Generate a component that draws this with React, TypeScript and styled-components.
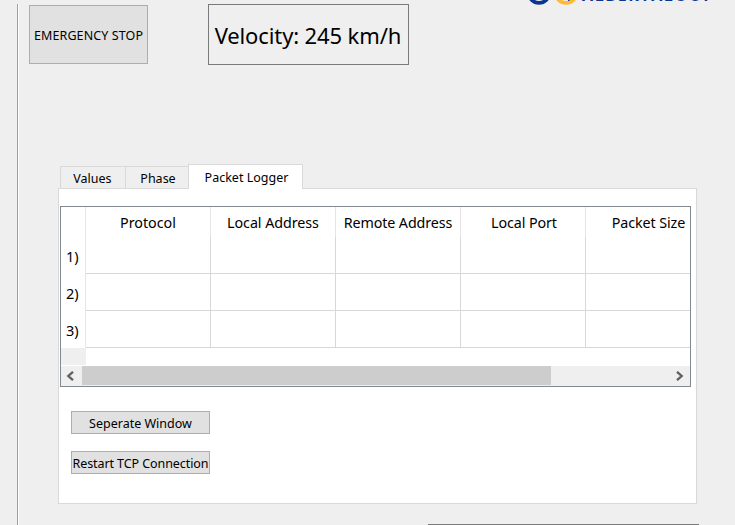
import React from "react";
import styled, { createGlobalStyle } from "styled-components";

const Global = createGlobalStyle`
  * { box-sizing: border-box; }
  html, body { margin: 0; overflow: hidden; background: #efefef; }
  body { font-family: "Noto Sans", "Open Sans", sans-serif; color: #000; }
`;

const Window = styled.main`
  width: 735px; height: 525px; overflow: hidden; background: #efefef;
  display: grid; grid-template-columns: 17px 718px;
`;
const Divider = styled.div`
  grid-column: 2; height: 521px; margin-top: 4px;
  border-left: 1px solid #a0a0a0; box-shadow: inset 1px 0 #fff;
`;
const Content = styled.div`display: flex; flex-direction: column; margin-top: -4px; height: 525px;`;
const TopBar = styled.header`display: flex; align-items: flex-start; height: 164px; padding-left: 11px;`;
const Label = styled.span<{ $size: number; $track?: number; $y?: number; $shift?: number }>`
  font-size: ${p => p.$size}px; letter-spacing: ${p => p.$track ?? 0}px;
  line-height: 1.2; white-space: nowrap; padding-top: ${p => p.$y ?? 0}px;
  margin-right: ${p => -(p.$track ?? 0)}px;
  margin-left: ${p => (p.$shift ?? 0) * 2}px;
`;
const Button = styled.button<{ $w: number; $h: number }>`
  width: ${p => p.$w}px; height: ${p => p.$h}px; padding: 0; border: 1px solid #adadad;
  border-radius: 0; background: #e1e1e1; color: #000; font-family: inherit;
  display: flex; align-items: center; justify-content: center; overflow: hidden;
`;
const StopSlot = styled.div`margin-top: 5px;`;
const Velocity = styled.div`
  width: 201px; height: 61px; margin: 4px 0 0 60px; border: 1px solid #7a7a7a;
  display: flex; align-items: center; justify-content: center; padding-top: 2px;
`;
const Brand = styled.div`
  display: flex; align-items: flex-start; height: 6px; margin-left: 119px; color: #0b3690;
`;
const BrandName = styled.span`
  margin: -15px 0 0 4px; font: 700 16px/20px "Open Sans", sans-serif; letter-spacing: 1.6px; white-space: nowrap;
`;
const Tabs = styled.nav`display: flex; align-items: flex-end; height: 25px; padding-left: 42px; margin-bottom: -1px; z-index: 1;`;
const Tab = styled.div<{ $w: number; $active?: boolean }>`
  width: ${p => p.$w}px; height: ${p => p.$active ? 25 : 23}px;
  border: 1px solid #d9d9d9; border-bottom: ${p => p.$active ? "0" : "1px solid #d9d9d9"};
  border-right-width: ${p => p.$active ? 1 : 0}px;
  background: ${p => p.$active ? "#fff" : "#efefef"};
  display: flex; align-items: center; justify-content: center;
`;
const Panel = styled.section`
  width: 639px; height: 316px; margin-left: 40px; padding: 17px 0 0 1px;
  border: 1px solid #d9d9d9; background: #fff;
`;
const TableFrame = styled.div`width: 631px; height: 181px; border: 1px solid #828790; overflow: hidden;`;
const Grid = styled.div`display: grid; grid-template-columns: 25px repeat(4, 125px) 104px; grid-template-rows: 30px 37px 37px 37px;`;
const HeaderCell = styled.div<{ $last?: boolean }>`
  width: 125px; height: 30px; border-right: ${p => p.$last ? 0 : 1}px solid #e5e5e5;
  display: flex; align-items: center; justify-content: center; padding-top: 2px;
`;
const RowHead = styled.div`
  border-right: 1px solid #e5e5e5; display: flex; align-items: center; padding: 2px 0 0 5px;
`;
const Cell = styled.div`border-right: 1px solid #d8d8d8; border-bottom: 1px solid #d8d8d8; &:nth-child(6n) { border-right: 0; }`;
const Corner = styled.div`width: 25px; height: 17px; background: #efefef; margin-bottom: 1px;`;
const ScrollBar = styled.div`display: flex; height: 20px; background: #efefef;`;
const Arrow = styled.div<{ $left?: boolean }>`
  width: 21px; height: 19px; display: flex; align-items: center; justify-content: center;
  padding-right: ${p => p.$left ? 3 : 0}px;
`;
const Thumb = styled.div`width: 469px; height: 19px; background: #cdcdcd; margin-right: 118px;`;
const Actions = styled.div`display: flex; flex-direction: column; gap: 17px; padding: 24px 0 0 11px;`;
const LowerFrame = styled.div`width: 271px; height: 1px; margin: 20px 0 0 410px; background: #7a7a7a;`;

const headings = [
  { name: "Protocol", track: 0 },
  { name: "Local Address", track: -0.05 },
  { name: "Remote Address", track: -0.1 },
  { name: "Local Port", track: -0.1, shift: 1 },
  { name: "Packet Size", track: -0.1 },
];

function Chevron({ right = false }: { right?: boolean }) {
  return <svg width="8" height="10" viewBox="0 0 8 10">
    <path d={right ? "M1 0.8 L5.7 5 L1 9.2" : "M7 0.8 L2.3 5 L7 9.2"} fill="none" stroke="#606060" strokeWidth="2.3" />
  </svg>;
}

export default function App() {
  return <>
    <Global />
    <Window><Divider><Content>
      <TopBar>
        <StopSlot><Button $w={119} $h={59}><Label $size={12.5} $track={0.1} $y={2}>EMERGENCY STOP</Label></Button></StopSlot>
        <Velocity><Label $size={22} $track={-0.12} $shift={-0.5}>Velocity: 245 km/h</Label></Velocity>
        <Brand>
          <svg width="50" height="6" viewBox="0 0 50 6">
            <circle cx="11" cy="-7.4" r="10.3" fill="none" stroke="#0b3690" strokeWidth="3.8" />
            <circle cx="38" cy="-7.4" r="10.3" fill="none" stroke="#ffb933" strokeWidth="3.8" />
            <path d="M40 0h1.5" stroke="#0b3690" strokeWidth="2" />
          </svg>
          <BrandName>ALBERTALOOP</BrandName>
        </Brand>
      </TopBar>
      <Tabs>
        <Tab $w={65}><Label $size={12.5} $y={2} $shift={-0.5}>Values</Label></Tab>
        <Tab $w={63}><Label $size={12.5} $y={2} $shift={1}>Phase</Label></Tab>
        <Tab $w={115} $active><Label $size={12.5} $y={1} $shift={1}>Packet Logger</Label></Tab>
      </Tabs>
      <Panel>
        <TableFrame>
          <Grid>
            <RowHead />
            {headings.map((h, i) => <HeaderCell key={h.name} $last={i === 4}><Label $size={14.3} $track={h.track} $shift={h.shift}>{h.name}</Label></HeaderCell>)}
            {[1, 2, 3].map(n => <React.Fragment key={n}>
              <RowHead><Label $size={14.5}>{n})</Label></RowHead>
              {headings.map(h => <Cell key={h.name} />)}
            </React.Fragment>)}
          </Grid>
          <Corner />
          <ScrollBar><Arrow $left><Chevron /></Arrow><Thumb /><Arrow><Chevron right /></Arrow></ScrollBar>
        </TableFrame>
        <Actions>
          <Button $w={139} $h={23}><Label $size={12.5} $y={2}>Seperate Window</Label></Button>
          <Button $w={139} $h={23}><Label $size={12.5} $track={-0.08} $y={2}>Restart TCP Connection</Label></Button>
        </Actions>
      </Panel>
      <LowerFrame />
    </Content></Divider></Window>
  </>;
}
